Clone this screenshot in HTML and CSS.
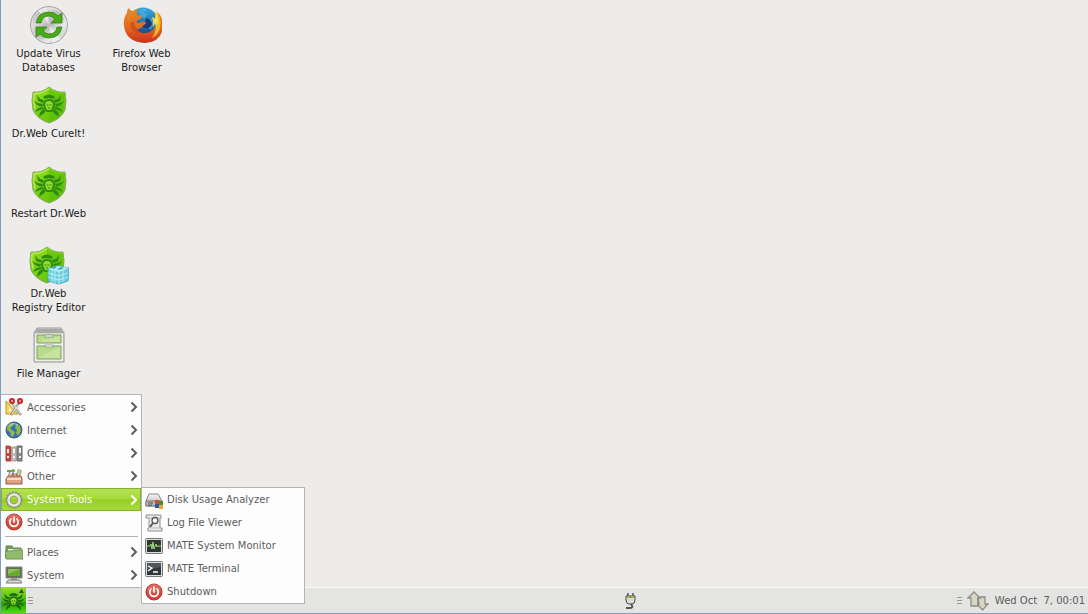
FILE: index.html
```html
<!DOCTYPE html>
<html lang="en">
<head>
  <meta charset="UTF-8">
  <meta name="viewport" content="width=device-width, initial-scale=1.0">
  <title>Desktop</title>
  <link rel="stylesheet" href="styles.css">
</head>
<body>

<!-- SHARED ICONS -->
<svg class="defs" aria-hidden="true">
  <defs>
    <linearGradient id="green" x1="0" y1="0" x2="1" y2="1">
      <stop offset="0" stop-color="#9be020"/><stop offset=".5" stop-color="#74d00c"/><stop offset="1" stop-color="#5ab80a"/>
    </linearGradient>
    <linearGradient id="start-green" x1="0" y1="0" x2="0" y2="1">
      <stop offset="0" stop-color="#8fdc22"/><stop offset=".5" stop-color="#4fc010"/><stop offset=".6" stop-color="#2a9a06"/><stop offset="1" stop-color="#4be010"/>
    </linearGradient>
    <linearGradient id="metal" x1="0" y1="0" x2="1" y2="1">
      <stop offset="0" stop-color="#8d8d8d"/><stop offset=".3" stop-color="#dcdcdc"/><stop offset=".5" stop-color="#b4b4b4"/><stop offset=".7" stop-color="#ececec"/><stop offset="1" stop-color="#a2a2a2"/>
    </linearGradient>
    <linearGradient id="silver" x1="0" y1="0" x2="0" y2="1">
      <stop offset="0" stop-color="#f7f7f7"/><stop offset="1" stop-color="#aaa"/>
    </linearGradient>
    <linearGradient id="fox" x1="0" y1="0" x2="0" y2="1">
      <stop offset="0" stop-color="#ee8a22"/><stop offset=".6" stop-color="#e3641e"/><stop offset="1" stop-color="#c9301c"/>
    </linearGradient>
    <linearGradient id="sky" x1="0" y1="0" x2="0" y2="1">
      <stop offset="0" stop-color="#35a9e0"/><stop offset="1" stop-color="#173a78"/>
    </linearGradient>
    <symbol id="spider" viewBox="0 0 30 26">
      <g fill="currentColor">
        <path d="m10 8-4-1-3-4 1 6 5 2zM20 8l4-1 3-4-1 6-5 2z"/>
        <path d="m9 12-5-1-4-2 3 4 5 2zM21 12l5-1 4-2-3 4-5 2z"/>
        <path d="m9 15-5 1-3 4 5-2 4-1zM21 15l5 1 3 4-5-2-4-1z"/>
        <path d="m10 17-4 3-1 5 4-3 3-3zM20 17l4 3 1 5-4-3-3-3z"/>
        <path d="M9 5q6-5 12 0l-2 2q-4-2-8 0z"/>
        <path d="M15 7q6 0 6 6-1 5-4 7h-4q-3-2-4-7 0-6 6-6z"/>
      </g>
      <path d="M15 9q4 0 4 4l-2 5h-4l-2-5q0-4 4-4z" fill="#8fdc2a"/>
      <path d="M12.500 13h2M15.500 13h2M14 16h2" stroke="currentColor" stroke-width="1.200"/>
    </symbol>
    <symbol id="shield" viewBox="0 0 40 40">
      <path d="M20 2q7 6 16 5 2 9 0 18-4 9-16 13Q8 34 4 25 2 16 4 7q9 1 16-5z" fill="url(#green)" stroke="#8ba866"/>
      <path d="M20 4q7 5 15 5 1 8-1 15-4 8-14 12z" fill="#53b80b" opacity=".45"/>
      <path d="M20 4Q13 9 5 9q-1 8 1 15" fill="none" stroke="#c8f168"/>
      <use href="#spider" x="5" y="7" width="30" height="26" color="#2f8a10"/>
    </symbol>
    <symbol id="power" viewBox="0 0 18 18">
      <circle cx="9" cy="9" r="8" fill="#d8453c" stroke="#a9372f"/>
      <path d="M2 8a7 7 0 0 1 14 0q-7 3-14 0z" fill="#e87d74" opacity=".6"/>
      <path d="M6 6a4.300 4.300 0 1 0 6 0M9 4v5" fill="none" stroke="#fff" stroke-width="1.700" stroke-linecap="round"/>
    </symbol>
    <symbol id="arrow" viewBox="0 0 8 12">
      <path d="M1.500 1.500 6 6l-4.500 4.500" fill="none" stroke="currentColor" stroke-width="2"/>
    </symbol>
  </defs>
</svg>

<!-- DESKTOP -->
<main class="desktop">
  <div class="column">
    <a class="shortcut" href="#update">
      <svg viewBox="0 0 40 40">
        <circle cx="20" cy="20" r="18.500" fill="url(#metal)" stroke="#a8a8a8"/>
        <circle cx="20" cy="20" r="17" fill="none" stroke="#e4e4e4"/>
        <path d="M20 20 9 5l9-3zM20 20l12 14-8 4z" fill="#fff" opacity=".5"/>
        <g fill="#48ab18" stroke="#2c7b0b" stroke-width=".7">
          <path d="M7 18Q9 7 20 7q6 0 9 4l4-3v10H22l4-4q-3-3-6-3-7 0-8 7z"/>
          <path d="M33 22q-2 11-13 11-6 0-9-4l-4 3V22h11l-4 4q3 3 6 3 7 0 8-7z"/>
        </g>
      </svg>
      <span>Update Virus Databases</span>
    </a>
    <a class="shortcut" href="#cureit">
      <svg><use href="#shield"/></svg>
      <span>Dr.Web CureIt!</span>
    </a>
    <a class="shortcut" href="#restart">
      <svg><use href="#shield"/></svg>
      <span>Restart Dr.Web</span>
    </a>
    <a class="shortcut" href="#registry">
      <svg viewBox="0 0 40 40">
        <use href="#shield" x="-2" width="40" height="40"/>
        <path d="m19 24 9-3 12 2-1 13-9 3-11-3z" fill="#6ccbdc" stroke="#4bb0c5"/>
        <path d="m19 24 11 3 10-4-12-2z" fill="#b5eef4"/>
        <path d="M30 27v12M19 28l11 3 9-3M19 32l11 3 9-3M23 25v12M26 26v12M34 25v12" fill="none" stroke="#c8f4f8" stroke-width=".8"/>
        <path d="m22 23 3-2 3 1-3 2zM28 24l4-2 3 1-4 2z" fill="#43aac1"/>
      </svg>
      <span>Dr.Web<br>Registry Editor</span>
    </a>
    <a class="shortcut" href="#files">
      <svg viewBox="0 0 40 40">
        <path d="M8 3h24l3 5v29H5V8z" fill="#d8d8d6" stroke="#999b97"/>
        <path d="M8 4h24l2 4H6z" fill="#a9aaa8"/>
        <path d="M6 9h28v27H6z" fill="#ededeb"/>
        <path d="M8 10h24v8H8zM8 21h24v13H8z" fill="#b7da8c" stroke="#80a65a"/>
        <path d="m9 17 22-6v6zM9 33l22-11v11z" fill="#cce8a8" opacity=".7"/>
        <path d="M16 10h8v2h-8zM16 20h8v2h-8z" fill="#fff" stroke="#7b8871" stroke-width=".7"/>
      </svg>
      <span>File Manager</span>
    </a>
  </div>
  <div class="column">
    <a class="shortcut" href="#firefox">
      <svg viewBox="0 0 40 40">
        <circle cx="21" cy="18" r="15.500" fill="url(#sky)"/>
        <path d="M17 6q4-3 8-2l-3 4 4 1-3 4-5-1zM27 15l5-3 1 7-4 6-4-3z" fill="#5cbbe4" opacity=".5"/>
        <path d="M24 13q5 1 6 6-2 5-7 4l-3-2q4-3 4-8z" fill="#173a78"/>
        <path d="M5 8q0-4 2-5 1 3 4 3 3-2 6-2-3 3-2 6l5 1q0 2-4 4-2 1-1 3 2 0 5-1 4-1 4 2-2 0-4 3-3 3-6 2 4 5 10 4 7-1 9-7l1 2q2-4 1-9l2 2q0-6-3-10 7 5 7 15-1 16-18 17Q4 37 2 21q-1-8 3-13z" fill="url(#fox)"/>
        <path d="M35 7q5 6 3 16-2 7-8 10 5-7 3-15l-2 4q1-6-1-10l3 2q1-4-1-8 2 1 3 4z" fill="#f0b92f"/>
        <path d="M34 8q3 5 2 12l-2-3 1 6-2-5-2 4q1-6-1-10l3 2q1-3 1-6z" fill="#f5e352"/>
        <path d="M6 8q-1 5 1 8 1-4 5-5l3-5q-3-1-5 1-2 0-4-3z" fill="#e0852d"/>
        <path d="M12 17q1 9 9 11-7 1-11-3-2-3-1-8z" fill="#c64a19" opacity=".7"/>
      </svg>
      <span>Firefox Web Browser</span>
    </a>
  </div>
</main>

<!-- PANEL -->
<footer class="panel">
  <div class="start">
    <button class="start-button" aria-label="Main menu">
      <svg viewBox="0 0 25 25">
        <path d="M0 0h25v25H0z" fill="url(#start-green)"/>
        <use href="#spider" x="1" y="3" width="23" height="20" color="#1c6a08"/>
        <path d="m18 5 2.500-4L23 5z" fill="#3b4a2c"/>
      </svg>
    </button>

    <ul class="menu main-menu">
      <li><button class="item">
        <svg viewBox="0 0 18 18">
          <path d="M1 3v13h12z" fill="#f3d65c" stroke="#c39a19"/><path d="M4 10v3h3z" fill="#fff"/>
          <path d="m7 5 9 12M14 5 6 17" stroke="#989898" stroke-width="2.500"/>
          <path d="m8 6 8 10M13 7 7 16" stroke="#eee"/>
          <circle cx="7" cy="3" r="2" fill="#f3b5b1" stroke="#cb2620" stroke-width="2"/><circle cx="15" cy="3" r="2" fill="#f3b5b1" stroke="#cb2620" stroke-width="2"/>
        </svg>
        Accessories<svg class="arrow"><use href="#arrow"/></svg>
      </button></li>
      <li><button class="item">
        <svg viewBox="0 0 18 18">
          <circle cx="9" cy="9" r="8" fill="#386fb2" stroke="#365b77"/>
          <path d="M2 6q3-5 7-4l-1 3-3 2 2 2 3 2-2 5-2-1-1-4-3-2zM11 3l4 2 1 5-3 5-2-3 1-3-2-2z" fill="#91b84c"/>
          <path d="M4 5q4-4 9-1" fill="none" stroke="#b9d1e1"/>
        </svg>
        Internet<svg class="arrow"><use href="#arrow"/></svg>
      </button></li>
      <li><button class="item">
        <svg viewBox="0 0 18 18">
          <path d="M1 2h3l2 1v14H1z" fill="#cf4439" stroke="#a5463f"/>
          <path d="M7 7V3h4v14H7z" fill="#c4c4c4" stroke="#999"/>
          <path d="M12 2h5v15h-5z" fill="#8a8a8a" stroke="#666"/>
          <path d="M2 5h2v4H2zM8 5h2v4H8zM14 4h2v5h-2z" fill="#f3f3f3"/>
          <path d="M3 12v2M9 12v2M15 12v2" stroke="#eee" stroke-width="2"/>
        </svg>
        Office<svg class="arrow"><use href="#arrow"/></svg>
      </button></li>
      <li><button class="item">
        <svg viewBox="0 0 18 18">
          <path d="M4 10 5 3M8 10V4M11 10l3-8M14 10l2-7" stroke="#a5aca0" stroke-width="2"/>
          <path d="M2 4h5M7 3l3 1" stroke="#69a43a" stroke-width="2"/><path d="m12 9 3-7" stroke="#bfe04e"/>
          <path d="M3 9h13l1 3v5H1v-5z" fill="#dda185" stroke="#9a5744"/>
          <path d="M2 12h14" stroke="#f5dbcc" stroke-width="2"/><path d="M7 9V7h5v2" fill="none" stroke="#a25a47"/>
        </svg>
        Other<svg class="arrow"><use href="#arrow"/></svg>
      </button></li>
      <li class="open"><button class="item active">
        <svg viewBox="0 0 18 18">
          <circle cx="9" cy="9" r="7.500" fill="none" stroke="#8a8e80" stroke-width="2" stroke-dasharray="2 1"/>
          <circle cx="9" cy="9" r="5.500" fill="none" stroke="#8b8f84" stroke-width="4"/>
          <circle cx="9" cy="9" r="5.500" fill="none" stroke="#e5e7df" stroke-width="2.500"/>
        </svg>
        System Tools<svg class="arrow"><use href="#arrow"/></svg>
      </button>
        <ul class="menu sub-menu">
          <li><button class="item">
            <svg viewBox="0 0 18 18">
              <path d="M4 3h9l4 7v5H1v-5z" fill="url(#silver)" stroke="#858585"/>
              <path d="M1 10h15v5H1z" fill="#bbb" stroke="#777"/><path d="M3 12h5M3 14h4" stroke="#555"/>
              <path d="M10 9h4v4h-4z" fill="#d64b25"/><path d="M14 10h4v4h-4z" fill="#4c8c28"/><path d="M10 13h4v4h-4z" fill="#245aa6"/><path d="M14 14h4v4h-4z" fill="#efa82b"/>
            </svg>
            Disk Usage Analyzer
          </button></li>
          <li><button class="item">
            <svg viewBox="0 0 18 18">
              <path d="M1 1h15v3h-1v10h2v3H3v-3h1V4H1z" fill="#ececec" stroke="#8d8d8d"/>
              <path d="M4 4h10M5 14h11" stroke="#bbb"/>
              <circle cx="10" cy="6.500" r="3" fill="#fff" stroke="#555" stroke-width="1.300"/><path d="m8 9-3 4" stroke="#555" stroke-width="2"/>
            </svg>
            Log File Viewer
          </button></li>
          <li><button class="item">
            <svg viewBox="0 0 18 18">
              <rect x=".5" y="1.500" width="17" height="15" rx="1" fill="#ddd" stroke="#777"/>
              <path d="M2 3h14v12H2z" fill="#2e3732"/>
              <path d="M2 9h3l1-2 1 5 1-7 1 7 2-5 1 3 1-1h3" fill="none" stroke="#a5dc79"/>
            </svg>
            MATE System Monitor
          </button></li>
          <li><button class="item">
            <svg viewBox="0 0 18 18">
              <rect x=".5" y="1.500" width="17" height="15" rx="1" fill="#ddd" stroke="#777"/>
              <path d="M2 3h14v12H2z" fill="#30363a"/><path d="M2 3h14v4L2 10z" fill="#50565a"/>
              <path d="m3 6 4 2-4 3M8 12h5" fill="none" stroke="#fff" stroke-width="1.300"/>
            </svg>
            MATE Terminal
          </button></li>
          <li><button class="item"><svg><use href="#power"/></svg>Shutdown</button></li>
        </ul>
      </li>
      <li><button class="item"><svg><use href="#power"/></svg>Shutdown</button></li>
      <li class="separator"></li>
      <li><button class="item">
        <svg viewBox="0 0 18 18">
          <path d="M1 15V3h6l1 2h8v10z" fill="#779d5a" stroke="#63864c"/>
          <path d="M3 6h12v4H3z" fill="#e6efdf"/>
          <path d="M0 8h7l2-1h9v9H1z" fill="#91bb70" stroke="#6e9454"/>
        </svg>
        Places<svg class="arrow"><use href="#arrow"/></svg>
      </button></li>
      <li><button class="item">
        <svg viewBox="0 0 18 18">
          <path d="M1 1h16v11H1z" fill="#5f6e55" stroke="#888"/>
          <path d="M3 3h12v7H3z" fill="#6aa832"/><path d="m3 3h12L3 8z" fill="#8dc35a"/>
          <path d="M6 12h6v2H6z" fill="#999"/>
          <path d="M3 14h12l2 3H1z" fill="#d8d8d8" stroke="#777"/>
        </svg>
        System<svg class="arrow"><use href="#arrow"/></svg>
      </button></li>
    </ul>
  </div>
  <span class="grip"></span>

  <div class="tray">
    <svg class="plug" viewBox="0 0 12 18">
      <path d="M4 5V1M9 5V1" stroke="#555" stroke-width="1.500"/>
      <path d="M2 4h9v4q0 4-3 4H5q-3 0-3-4z" fill="#d9ddd5" stroke="#454a42"/>
      <path d="M3 4h7v2H3z" fill="#95b853"/><path d="M6 4h1v2H6z" fill="#d45b37"/>
      <path d="M7 12q3 4-1 4H2" fill="none" stroke="#555" stroke-width="2"/>
    </svg>
  </div>

  <span class="grip"></span>
  <svg class="network" viewBox="0 0 22 20">
    <g fill="#d9d5c0" stroke="#8c8e89" stroke-width="1.300">
      <path d="M11 6h7v7h3l-5.500 6L10 13h2z"/>
      <path d="M7 1 1 7h3v8h7V7h2z"/>
      <path d="M11 6v9"/>
    </g>
  </svg>
  <time class="clock">Wed Oct&nbsp; 7, 00:01</time>
</footer>

</body>
</html>
```
FILE: styles.css
```css
* { box-sizing: border-box; }

body {
  margin: 0;
  min-height: 100vh;
  display: flex;
  flex-direction: column;
  background: #edeceb;
  border-left: 1px solid #839bc5;
  border-bottom: 1px solid #839bc5;
  font-family: "DejaVu Sans", sans-serif;
  font-size: 10px;
}

svg { display: block; flex: none; }
.defs { position: absolute; width: 0; height: 0; }
button { font: inherit; color: inherit; border: 0; padding: 0; background: none; }

/* DESKTOP ICONS */
.desktop { flex: 1; display: flex; padding-left: 1px; }
.column { width: 93px; }

.shortcut {
  display: flex;
  flex-direction: column;
  align-items: center;
  gap: 2px;
  height: 80px;
  padding: 5px 8px 0;
  color: #1a1a1a;
  line-height: 14px;
  text-align: center;
  text-decoration: none;
}

.shortcut svg { width: 40px; height: 40px; }

/* PANEL */
.panel {
  height: 26px;
  display: flex;
  align-items: center;
  background: #e4e4e3;
  border-top: 1px solid #fafafa;
  color: #5c5c5c;
}

.start { position: relative; }
.start-button { display: block; }
.start-button svg { width: 25px; height: 25px; }

.grip {
  width: 5px;
  height: 7px;
  margin-left: 2px;
  background: repeating-linear-gradient(#999 0 1px, transparent 1px 3px);
}

.tray { flex: 1; display: flex; }
.tray::before { content: ""; flex: 65; }
.tray::after { content: ""; flex: 35; }
.plug { width: 12px; height: 18px; }
.network { width: 22px; height: 20px; margin: 0 6px 0 5px; }
.clock { padding-right: 3px; white-space: pre; }

/* MENUS */
.menu {
  position: absolute;
  margin: 0;
  padding: 0;
  list-style: none;
  background: #fdfdfd;
  border: 1px solid #b4b4b4;
  color: #5c5c5c;
}

.main-menu { left: 0; bottom: 100%; width: 141px; padding-top: 1px; border-left: 0; }
.sub-menu { left: 100%; top: -1px; width: 164px; }
.open { position: relative; }

.item {
  display: flex;
  align-items: center;
  gap: 4px;
  width: 100%;
  height: 23px;
  padding: 0 3px 1px 4px;
  text-align: left;
  white-space: nowrap;
}

.item svg { width: 18px; height: 18px; }
.item .arrow { width: 8px; height: 12px; margin-left: auto; }
.sub-menu .item { padding: 0 3px; }

.item.active {
  color: #fff;
  background: linear-gradient(#b4e052, #a6da3b 50%, #97d124 50%, #a5da3a);
  border: 1px solid #83b22f;
  padding: 0 2px 0 3px;
}

.separator { height: 7px; padding: 2px 3px 3px 4px; }
.separator::before { content: ""; display: block; height: 1px; background: #b4b4b4; }
```
